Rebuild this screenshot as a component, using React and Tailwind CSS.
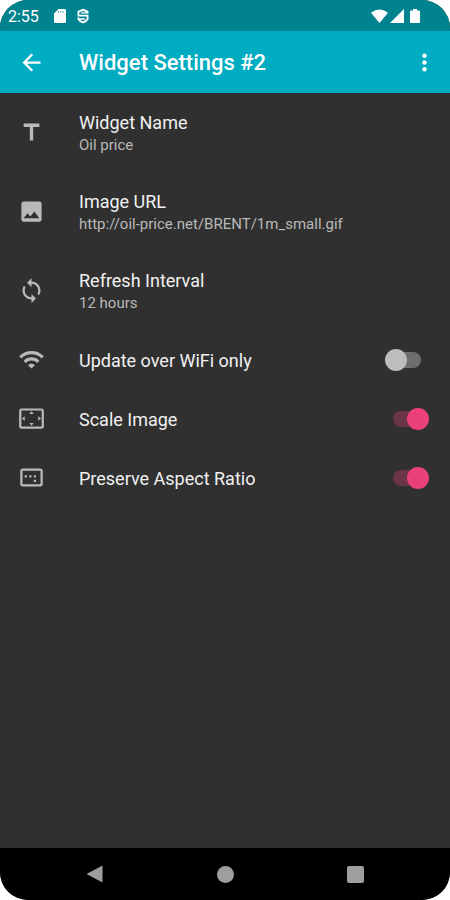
import React, { useState } from 'react';
import {
    MdArrowBack,
    MdImage,
    MdImageAspectRatio,
    MdMoreVert,
    MdSettingsOverscan,
    MdSync,
    MdTitle,
    MdWifi,
} from 'react-icons/md';

const StatusBar = () => (
    <div className="flex h-[31px] items-center bg-[#00838f] pl-2 pr-[30px] text-white">
        <span className="w-11 pt-0.5 text-base">2:55</span>
        <svg className="h-4 w-4" viewBox="0 0 16 16" fill="currentColor">
            <path d="M6.500 1H12.500Q14 1 14 2.500V13.500Q14 15 12.500 15H3.500Q2 15 2 13.500V5.500Z" />
            <path d="M6.500 3v2M8.800 3v2M11.100 3v2" stroke="#00838f" strokeWidth="0.600" />
        </svg>
        <svg className="ml-[7px] h-4 w-4" viewBox="0 0 16 16" fill="none" stroke="currentColor" strokeWidth="1.800">
            <path d="M12.600 5.400V3.600L8 1.800L3.400 3.600V7.600H12.600V11Q11.500 13.200 8 14.300Q4.500 13.200 3.400 11V9.600" />
            <path d="M6 4.900H12.600M3.400 11H10" strokeWidth="1.400" />
        </svg>
        <div className="ml-auto flex items-center">
            <svg className="h-4 w-[17px]" viewBox="0 0 17 16" fill="currentColor">
                <path d="M8.500 15L0 4.800Q8.500-1.800 17 4.800Z" />
            </svg>
            <svg className="ml-0.5 h-4 w-[14px]" viewBox="0 0 14 16" fill="currentColor">
                <path d="M14 1V15H0Z" />
            </svg>
            <svg className="ml-1.5 h-4 w-[10px]" viewBox="0 0 10 16" fill="currentColor">
                <path d="M3 1H7V2.500H9Q10 2.500 10 3.500V14Q10 15 9 15H1Q0 15 0 14V3.500Q0 2.500 1 2.500H3Z" />
            </svg>
        </div>
    </div>
);

const Toolbar = () => (
    <header className="flex h-[62px] items-center bg-[#00acc1] pl-[18px] pr-3 text-white">
        <button aria-label="Back" className="w-[61px]"><MdArrowBack size={27} /></button>
        <h1 className="flex-1 text-[22px] font-medium">Widget Settings #2</h1>
        <button aria-label="More options"><MdMoreVert size={27} /></button>
    </header>
);

const PreferenceRow = ({ icon: Icon, title, value }) => (
    <button className="flex h-[79px] w-full items-center pl-[18px] pr-[21px] text-left">
        <span className="w-[61px] text-[#b9b9b9]"><Icon size={27} /></span>
        <span className="flex-1 pt-0.5">
            <span className="block text-lg leading-[22px]">{title}</span>
            <span className="block text-[15px] leading-[22px] text-[#b9b9b9]">{value}</span>
        </span>
    </button>
);

const SwitchRow = ({ icon: Icon, title, defaultChecked }) => {
    const [checked, setChecked] = useState(defaultChecked);

    return (
        <label className="flex h-[59px] items-center pl-[18px] pr-[21px]">
            <span className="w-[61px] text-[#b9b9b9]"><Icon size={27} /></span>
            <span className="flex-1 pt-0.5 text-lg leading-[22px]">{title}</span>
            <input
                type="checkbox"
                role="switch"
                checked={checked}
                onChange={e => setChecked(e.target.checked)}
                className="relative h-[22px] w-11 appearance-none before:absolute before:inset-x-2 before:inset-y-[3px] before:rounded-full before:bg-[#6e6e6e] after:absolute after:left-0 after:top-0 after:h-[22px] after:w-[22px] after:rounded-full after:bg-[#bdbdbd] checked:before:bg-[#6b3447] checked:after:left-[22px] checked:after:bg-[#ec407a]"
            />
        </label>
    );
};

const NavigationBar = () => (
    <nav className="flex h-[52px] items-center justify-center bg-black text-[#9e9e9e]">
        <button aria-label="Back" className="flex w-[130px] justify-center">
            <svg className="h-[18px] w-[18px]" viewBox="0 0 18 18" fill="currentColor"><path d="M16.500 0.500V17.500L0.500 9Z" /></svg>
        </button>
        <button aria-label="Home" className="flex w-[130px] justify-center">
            <span className="h-[17px] w-[17px] rounded-full bg-[#9e9e9e]" />
        </button>
        <button aria-label="Overview" className="flex w-[130px] justify-center">
            <span className="h-[17px] w-[17px] rounded-xs bg-[#9e9e9e]" />
        </button>
    </nav>
);

const App = () => (
    <div className="bg-white font-[Roboto,sans-serif]">
        <div className="flex min-h-screen flex-col overflow-hidden rounded-[28px] bg-[#303030] text-[#f0f0f0]">
            <StatusBar />
            <Toolbar />
            <main className="flex-1">
                <PreferenceRow icon={MdTitle} title="Widget Name" value="Oil price" />
                <PreferenceRow icon={MdImage} title="Image URL" value="http://oil-price.net/BRENT/1m_small.gif" />
                <PreferenceRow icon={MdSync} title="Refresh Interval" value="12 hours" />
                <SwitchRow icon={MdWifi} title="Update over WiFi only" defaultChecked={false} />
                <SwitchRow icon={MdSettingsOverscan} title="Scale Image" defaultChecked />
                <SwitchRow icon={MdImageAspectRatio} title="Preserve Aspect Ratio" defaultChecked />
            </main>
            <NavigationBar />
        </div>
    </div>
);

export default App;
